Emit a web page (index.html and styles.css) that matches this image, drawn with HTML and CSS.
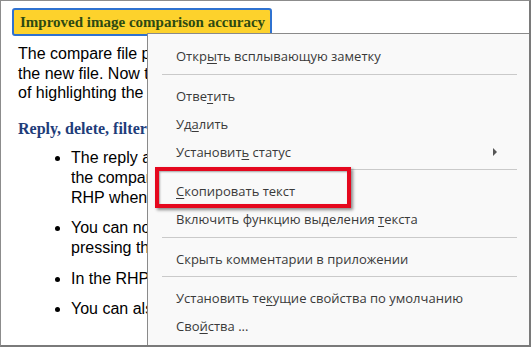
FILE: index.html
```html
<!DOCTYPE html>
<html>
<head>
<meta charset="utf-8">
<link rel="stylesheet" href="styles.css">
</head>
<body>
<div class="frame">
  <div class="doc">
    <div class="title"><span class="title-box">Improved image comparison accuracy</span></div>
    <p class="para">The compare file pane now shows more accurate image differences between<br>the new file. Now the changes are shown more clearly, instead<br>of highlighting the whole image as changed.</p>
    <h2 class="subhead">Reply, delete, filter and hide comments in the compare report</h2>
    <ul class="bullets">
      <li>The reply and delete options are now available for comments in<br>the compare report. You can reply to a comment in the<br>RHP when the comment is selected.</li>
      <li>You can now delete a comment by selecting it and<br>pressing the Delete key.</li>
      <li>In the RHP, you can filter comments by type.</li>
      <li>You can also hide comments in the application.</li>
    </ul>
  </div>

  <div class="menu">
    <div class="item">Откр<u>ы</u>ть всплывающую заметку</div>
    <div class="sep"></div>
    <div class="item">Отве<u>т</u>ить</div>
    <div class="item">Уд<u>а</u>лить</div>
    <div class="item has-sub">Установит<u>ь</u> статус<span class="arrow"></span></div>
    <div class="sep"></div>
    <div class="item"><u>С</u>копировать текст</div>
    <div class="item">Включить функцию выделения <u>т</u>екста</div>
    <div class="sep"></div>
    <div class="item">Скрыть комментарии в приложении</div>
    <div class="sep"></div>
    <div class="item">Установить те<u>к</u>ущие свойства по умолчанию</div>
    <div class="item">Сво<u>й</u>ства ...</div>
  </div>

  <div class="highlight"></div>
</div>
</body>
</html>
```

FILE: styles.css
```css
html, body {
  margin: 0;
  padding: 0;
  background: #ffffff;
}

.frame {
  position: relative;
  width: 531px;
  height: 347px;
  box-sizing: border-box;
  border-top: 1px solid #8c8c8c;
  border-left: 1px solid #8c8c8c;
  border-right: 2px solid #7a7a7a;
  border-bottom: 2px solid #7a7a7a;
  overflow: hidden;
  background: #ffffff;
}

.doc {
  padding: 7px 0 0 11px;
  white-space: nowrap;
}

.title {
  display: flex;
}

.title-box {
  display: inline-block;
  border: 2px solid #2f72d0;
  border-radius: 3px;
  background: #fdd22c;
  padding: 2px 5px 2px 6px;
  font-family: "Liberation Serif", "Times New Roman", serif;
  font-weight: bold;
  font-size: 15px;
  line-height: 20px;
  color: #2d4a12;
}

.para {
  margin: 8px 0 0 6px;
  font-family: "Liberation Sans", Arial, sans-serif;
  font-size: 16px;
  line-height: 19.5px;
  color: #000000;
}

.subhead {
  margin: 16px 0 0 6px;
  font-family: "Liberation Serif", "Times New Roman", serif;
  font-weight: bold;
  font-size: 16px;
  line-height: 20px;
  color: #1f3d7a;
}

.bullets {
  margin: 9px 0 0 0;
  padding: 0 0 0 59px;
  font-family: "Liberation Sans", Arial, sans-serif;
  font-size: 16px;
  line-height: 20px;
  color: #000000;
}

.bullets li {
  margin-bottom: 10.5px;
}

.menu {
  position: absolute;
  left: 146px;
  top: 32px;
  right: 0;
  bottom: 0;
  box-sizing: border-box;
  border-left: 1px solid #8a8a8a;
  border-top: 1px solid #8a8a8a;
  background: #f9f9f9;
  padding: 8px 0 0 0;
  font-family: "Open Sans", "Noto Sans", sans-serif;
  font-size: 13px;
  color: #3a3a3a;
}

.item {
  position: relative;
  height: 28px;
  line-height: 28px;
  padding-left: 28px;
  white-space: nowrap;
}

.item u {
  text-decoration-thickness: 1px;
  text-underline-offset: 2px;
}

.arrow {
  position: absolute;
  left: 345px;
  top: 10px;
  width: 0;
  height: 0;
  border-top: 4px solid transparent;
  border-bottom: 4px solid transparent;
  border-left: 4px solid #555555;
}

.sep {
  height: 1px;
  background: #cacaca;
  margin: 3.5px 12px 7px 14px;
}

.highlight {
  position: absolute;
  left: 154px;
  top: 166px;
  width: 196px;
  height: 41px;
  box-sizing: border-box;
  border: 4px solid #e5081e;
  box-shadow: 2px 2px 3px rgba(0, 0, 0, 0.45), inset 1px 1px 2px rgba(0, 0, 0, 0.35);
}
```
